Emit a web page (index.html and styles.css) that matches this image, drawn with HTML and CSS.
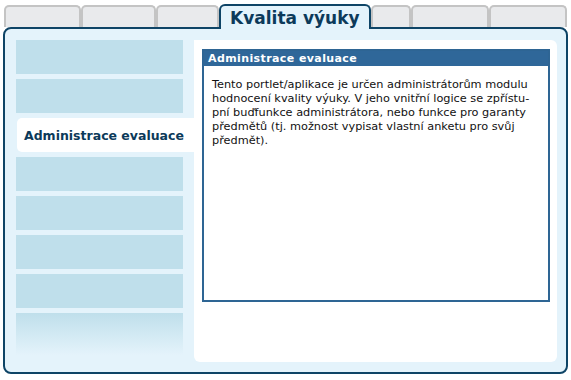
FILE: index.html
```html
<!DOCTYPE html>
<html>
<head>
    <meta charset="utf-8">
    <title>Kvalita výuky</title>
    <link rel="stylesheet" href="styles.css">
</head>
<body>
<div class="tabs">
    <div class="tab" style="width:77px"></div>
    <div class="tab" style="width:75px"></div>
    <div class="tab" style="width:63px"></div>
    <div class="tab tab-active">Kvalita výuky</div>
    <div class="tab" style="width:40px"></div>
    <div class="tab" style="width:78px"></div>
    <div class="tab" style="width:78px"></div>
</div>
<div class="panel">
    <ul class="menu">
        <li></li>
        <li></li>
        <li class="active">Administrace evaluace</li>
        <li></li>
        <li></li>
        <li></li>
        <li></li>
        <li class="fade"></li>
    </ul>
    <div class="content">
        <div class="portlet">
            <div class="portlet-head">Administrace evaluace</div>
            <div class="portlet-body">
                Tento portlet/aplikace je určen administrátorům modulu<br>
                hodnocení kvality výuky. V jeho vnitřní logice se zpřístu-<br>
                pní buďfunkce administrátora, nebo funkce pro garanty<br>
                předmětů (tj. možnost vypisat vlastní anketu pro svůj<br>
                předmět).
            </div>
        </div>
    </div>
</div>
</body>
</html>
```
FILE: styles.css
```css
body{
    margin: 0;
    background: #fff;
    font-family: "DejaVu Sans", Verdana, sans-serif;
}
.tabs{
    display: flex;
    align-items: flex-end;
    height: 29px;
    padding-left: 4px;
    position: relative;
    z-index: 2;
}
.tab{
    box-sizing: border-box;
    height: 22px;
    margin-bottom: 2px;
    background: #e9eaec;
    border: 2px solid #c4c4c4;
    border-bottom: none;
    border-radius: 5px 5px 0 0;
}
.tab-active{
    width: 152px;
    height: 25px;
    margin-bottom: 0;
    background: #e4f3fb;
    border-color: #0e4466;
    border-radius: 6px 6px 0 0;
    color: #0c3a5a;
    font-weight: bold;
    font-size: 17px;
    line-height: 24px;
    padding-left: 9px;
}
.panel{
    box-sizing: border-box;
    display: flex;
    margin: -2px 0 0 3px;
    width: 565px;
    height: 347px;
    padding: 11px 9px 10px 11px;
    background: #e4f3fb;
    border: 2px solid #0e4466;
    border-radius: 8px;
}
.menu{
    list-style: none;
    margin: 0;
    padding: 0;
    width: 178px;
    display: flex;
    flex-direction: column;
    gap: 5px;
}
.menu li{
    width: 167px;
    height: 34px;
    background: #bfdfeb;
}
.menu li.active{
    width: 177px;
    margin-left: 1px;
    background: #fff;
    border-radius: 5px 0 0 5px;
    color: #0c3a5a;
    font-weight: bold;
    font-size: 12.5px;
    line-height: 35px;
    padding-left: 7px;
    box-sizing: border-box;
}
.menu li.fade{
    height: 42px;
    background: linear-gradient(#bfdfeb, #e4f3fb);
}
.content{
    flex: 1;
    background: #fff;
    border-radius: 0 6px 6px 6px;
    padding: 9px 7px 0 8px;
}
.portlet{
    box-sizing: border-box;
    height: 253px;
    border: 2px solid #2e6594;
}
.portlet-head{
    background: #2f6799;
    color: #fff;
    font-weight: bold;
    font-size: 11px;
    height: 15px;
    line-height: 15px;
    padding-left: 4px;
    letter-spacing: 0.4px;
}
.portlet-body{
    padding: 12px 8px;
    font-size: 11.3px;
    line-height: 14px;
    color: #111;
    white-space: nowrap;
}
```
